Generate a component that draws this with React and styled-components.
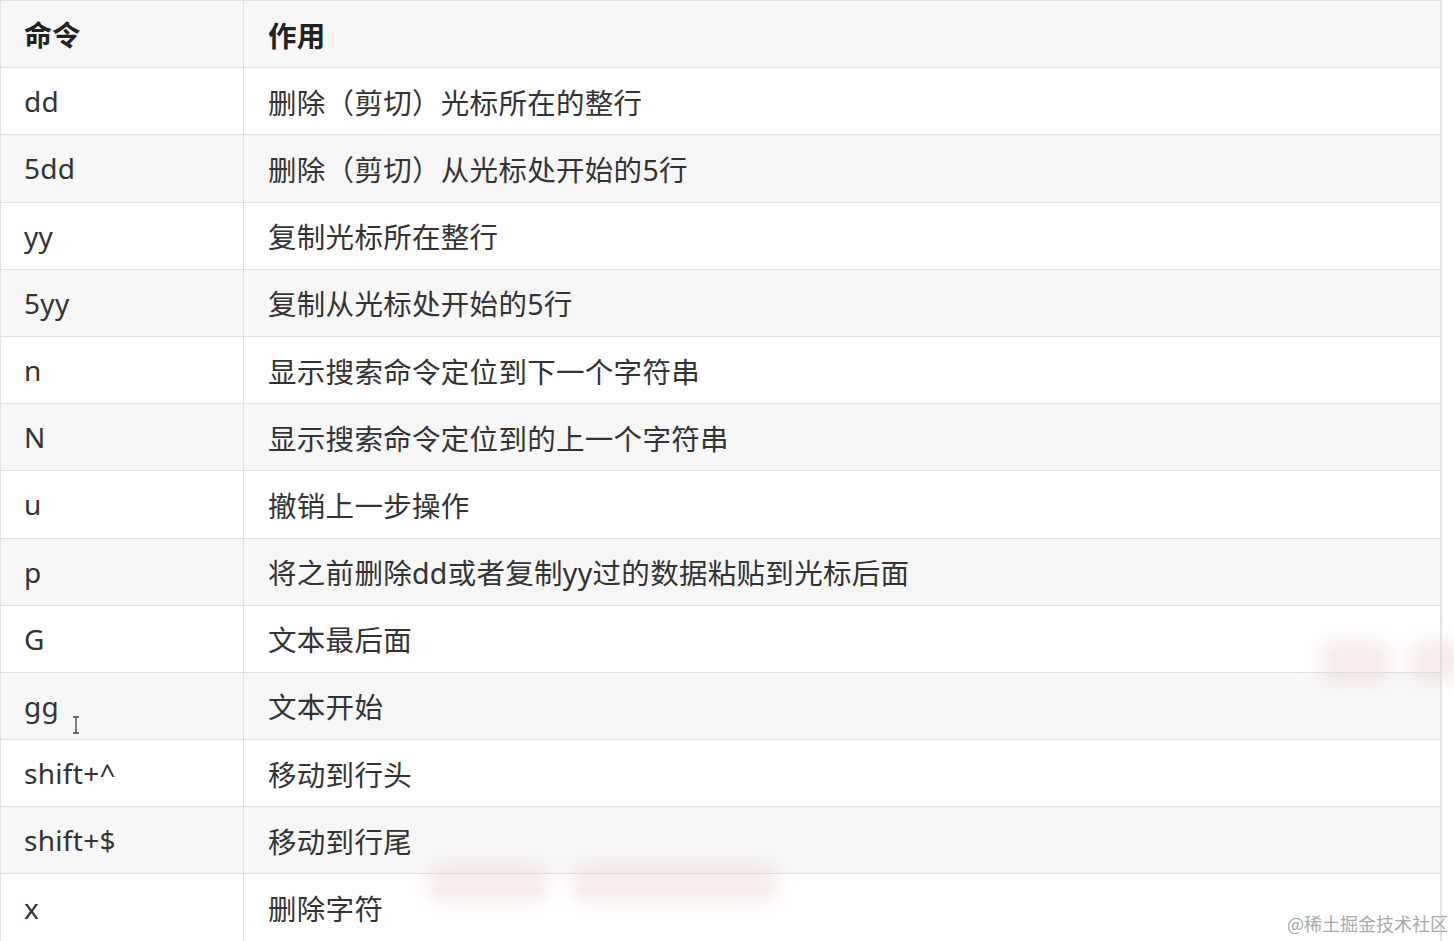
import React from "react"
import styled, { createGlobalStyle } from "styled-components"

const rows = [
  ["dd", "删除（剪切）光标所在的整行"],
  ["5dd", "删除（剪切）从光标处开始的5行"],
  ["yy", "复制光标所在整行"],
  ["5yy", "复制从光标处开始的5行"],
  ["n", "显示搜索命令定位到下一个字符串"],
  ["N", "显示搜索命令定位到的上一个字符串"],
  ["u", "撤销上一步操作"],
  ["p", "将之前删除dd或者复制yy过的数据粘贴到光标后面"],
  ["G", "文本最后面"],
  ["gg", "文本开始"],
  ["shift+^", "移动到行头"],
  ["shift+$", "移动到行尾"],
  ["x", "删除字符"],
]

const GlobalStyle = createGlobalStyle`
  body {
    margin: 0;
    background: #fff;
    font-family: "Noto Sans", "Noto Sans CJK SC", sans-serif;
    overflow: hidden;
  }
`

const Page = styled.div`
  position: relative;
  width: 1454px;
  height: 941px;
  overflow: hidden;
`

const Table = styled.div`
  width: 1442px;
  border-top: 1px solid #e2e2e2;
  border-left: 1px solid #e2e2e2;
  border-right: 2px solid #e4e4e4;
  box-sizing: border-box;
`

const Row = styled.div`
  display: grid;
  grid-template-columns: 242px 1fr;
  height: 67.2px;
  box-sizing: border-box;
  border-bottom: 1px solid #e0e0e0;
  background: ${p => (p.$shade ? "#f7f7f7" : "#fff")};
`

const Cell = styled.div`
  display: flex;
  align-items: center;
  padding-left: ${p => (p.$first ? "23px" : "24px")};
  border-left: ${p => (p.$first ? "none" : "1px solid #e0e0e0")};
  font-size: ${p => (p.$first ? "28px" : "28.5px")};
  color: ${p => (p.$head ? "#222" : "#333")};
  font-weight: ${p => (p.$head ? 700 : 400)};
  letter-spacing: 0.3px;
  white-space: nowrap;
`

const Blur = styled.div`
  position: absolute;
  left: ${p => p.$x}px;
  top: ${p => p.$y}px;
  width: ${p => p.$w}px;
  height: ${p => p.$h}px;
  background: rgba(236, 206, 206, 0.45);
  filter: blur(10px);
  border-radius: 14px;
`

const Watermark = styled.div`
  position: absolute;
  right: 6px;
  bottom: 5px;
  font-family: "Noto Sans CJK SC", serif;
  font-size: 18px;
  color: #a9a9a9;
`

const Caret = styled.svg`
  position: absolute;
  left: 71px;
  top: 716px;
`

export default function App() {
  return (
    <Page>
      <GlobalStyle />
      <Table>
        <Row $shade>
          <Cell $first $head>命令</Cell>
          <Cell $head>作用</Cell>
        </Row>
        {rows.map(([cmd, desc], i) => (
          <Row key={cmd} $shade={i % 2 === 1}>
            <Cell $first>{cmd}</Cell>
            <Cell>{desc}</Cell>
          </Row>
        ))}
      </Table>
      <Blur $x={1320} $y={640} $w={70} $h={42} />
      <Blur $x={1410} $y={640} $w={50} $h={42} />
      <Blur $x={428} $y={864} $w={120} $h={38} />
      <Blur $x={572} $y={864} $w={206} $h={38} />
      <Caret width="10" height="18" viewBox="0 0 10 18">
        <path d="M2 1h6M5 1v16M2 17h6" stroke="#444" strokeWidth="1.3" fill="none" />
      </Caret>
      <Watermark>@稀土掘金技术社区</Watermark>
    </Page>
  )
}
